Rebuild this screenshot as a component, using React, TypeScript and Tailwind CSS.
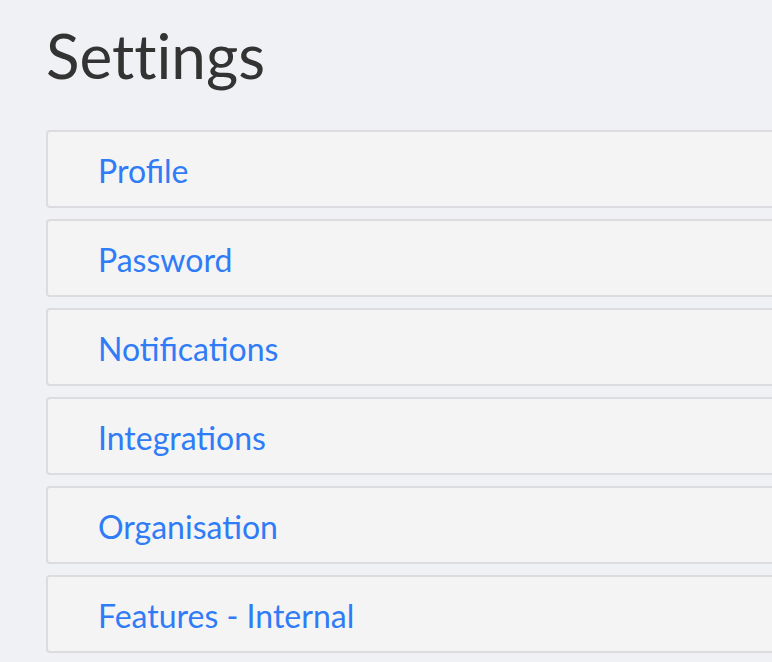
import React from "react";

const items = ["Profile", "Password", "Notifications", "Integrations", "Organisation", "Features - Internal"];

export default function App() {
  return (
    <div className="w-[772px] h-[662px] overflow-hidden bg-[#f0f1f4] pl-[46px] pt-[18px] font-['Lato','Liberation_Sans',sans-serif]">
      <h1 className="text-[62px] leading-[1.2] text-[#333333] font-normal [font-variant-ligatures:none]">Settings</h1>
      <div className="mt-[38px] flex flex-col gap-[11px] w-[760px]">
        {items.map((t) => (
          <div
            key={t}
            className="h-[78px] shrink-0 flex items-center bg-[#f4f4f5] border-2 border-[#dcdce0] rounded-[4px] pl-[50px] pt-[3px]"
          >
            <a href="#" className="text-[32px] leading-[1.2] text-[#2f7cf6]">
              {t}
            </a>
          </div>
        ))}
      </div>
    </div>
  );
}
